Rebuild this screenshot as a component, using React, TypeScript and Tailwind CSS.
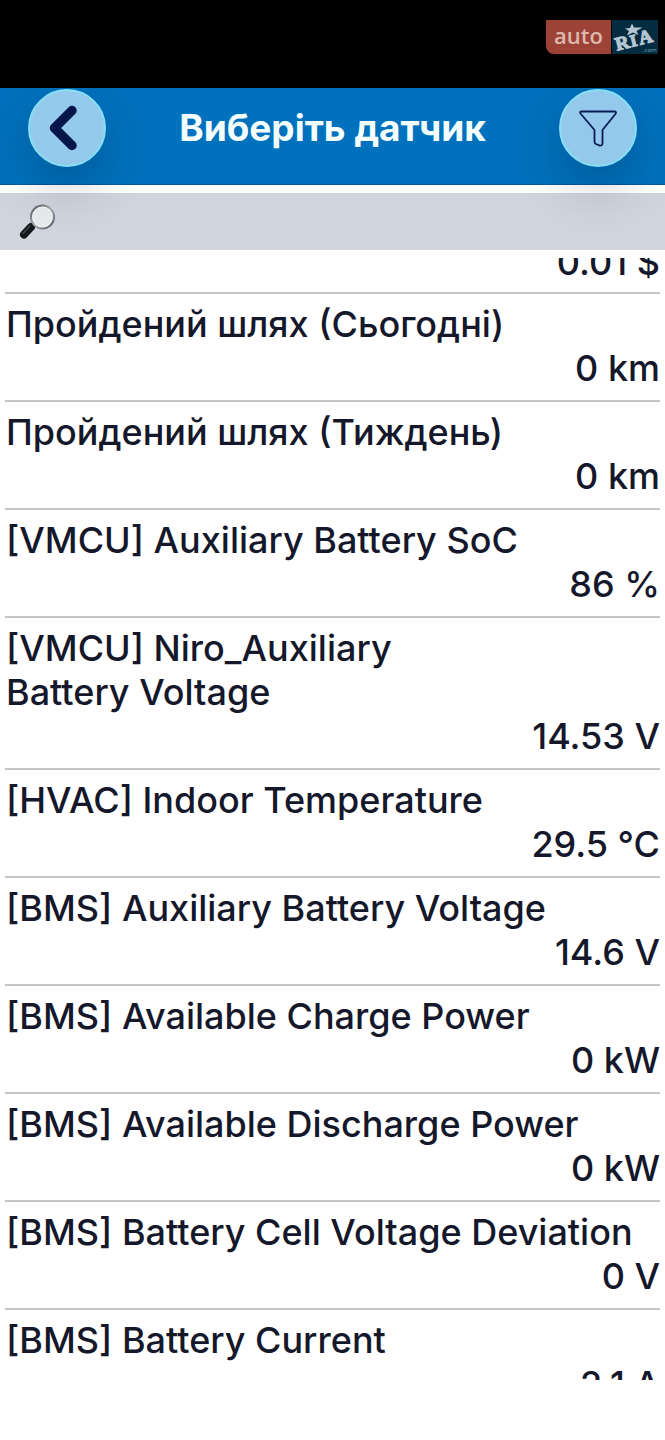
type Sensor = {
  name: string
  value: string
}

const sensors: Sensor[] = [
  { name: "Пройдений шлях (Сьогодні)", value: "0 km" },
  { name: "Пройдений шлях (Тиждень)", value: "0 km" },
  { name: "[VMCU] Auxiliary Battery SoC", value: "86 %" },
  { name: "[VMCU] Niro_Auxiliary\nBattery Voltage", value: "14.53 V" },
  { name: "[HVAC] Indoor Temperature", value: "29.5 °C" },
  { name: "[BMS] Auxiliary Battery Voltage", value: "14.6 V" },
  { name: "[BMS] Available Charge Power", value: "0 kW" },
  { name: "[BMS] Available Discharge Power", value: "0 kW" },
  { name: "[BMS] Battery Cell Voltage Deviation", value: "0 V" },
  { name: "[BMS] Battery Current", value: "2.1 A" },
]

function AutoRiaLogo() {
  return (
    <div className="flex h-[34px] gap-[1px]">
      <span className="flex w-[65px] items-center justify-center rounded-bl-lg bg-[#9c4237] pb-1 font-['Open_Sans',sans-serif] text-[22px] leading-none font-semibold text-[#dfb9ae]">
        auto
      </span>
      <svg viewBox="0 0 46 34" className="h-[34px] w-[46px] bg-[#032c40]" role="img" aria-label="RIA.com">
        <path d="M20 3.5l2 4 8.500 0-6 3.500 2 4-5.500-2.500-6 3 2-4.500-4-2.500 5-.5z" fill="#b4c6d2" />
        <g transform="rotate(-14 23 20)" fill="#b4c6d2" stroke="#b4c6d2" strokeWidth="1.2">
          <text x="3" y="26" fontFamily="'Liberation Serif', serif" fontSize="19" fontWeight="700">
            R
          </text>
          <text x="18" y="26" fontFamily="'Liberation Serif', serif" fontSize="17" fontWeight="700">
            I
          </text>
          <text x="27" y="26" fontFamily="'Liberation Serif', serif" fontSize="19" fontWeight="700">
            A
          </text>
        </g>
        <text x="31" y="32" fontFamily="'Open Sans', sans-serif" fontSize="6" fill="#8ba5b4">
          .com
        </text>
      </svg>
    </div>
  )
}

function MagnifierIcon() {
  return (
    <svg viewBox="0 0 38 38" className="size-[38px] shrink-0" aria-hidden="true">
      <defs>
        <linearGradient id="rim" x1="0" y1="0" x2="1" y2="1">
          <stop offset="0" stopColor="#4d4f54" />
          <stop offset="0.5" stopColor="#a9abb0" />
          <stop offset="1" stopColor="#4d4f54" />
        </linearGradient>
      </defs>
      <path d="M13 23l3.500-3.500" stroke="#77797d" strokeWidth="4" />
      <path d="M6 31.500l7-7.500" stroke="#15181b" strokeWidth="8" strokeLinecap="round" />
      <path d="M5 30.500l7-7.500" stroke="#41484a" strokeWidth="1.500" strokeLinecap="round" />
      <circle cx="24.500" cy="14" r="11.500" fill="#e9eaed" stroke="url(#rim)" strokeWidth="2" />
      <circle cx="24.500" cy="14" r="9.800" fill="none" stroke="#f8f8fa" strokeWidth="0.8" />
    </svg>
  )
}

const roundButton =
  "flex size-[78px] shrink-0 items-center justify-center rounded-full border-2 border-[#86e0f5] bg-[#94c9ec] shadow-[0_20px_50px_rgba(0,0,0,0.2)]"

export default function App() {
  return (
    <div className="flex h-screen flex-col bg-white pb-[60px] font-[Inter,sans-serif] text-4xl text-[#15182b]">
      <div className="flex h-[88px] shrink-0 items-start justify-end bg-black pt-5 pr-[7px]">
        <AutoRiaLogo />
      </div>

      <header className="relative flex h-[97px] shrink-0 items-start justify-between border-b border-[#07589b] bg-[#0071bd] px-7 pt-[1px]">
        <button type="button" aria-label="Назад" className={roundButton}>
          <svg viewBox="0 0 78 78" className="size-[78px] shrink-0" fill="none" aria-hidden="true">
            <path
              d="M44 21.500L26.500 39 44 56.500"
              stroke="#07164a"
              strokeWidth="9.500"
              strokeLinecap="round"
              strokeLinejoin="round"
            />
          </svg>
        </button>
        <h1 className="pt-[17px] text-[37px] leading-[44px] font-bold whitespace-nowrap text-[#f5feff]">
          Виберіть датчик
        </h1>
        <button type="button" aria-label="Фільтр" className={roundButton}>
          <svg viewBox="0 0 78 78" className="size-[78px] shrink-0" fill="none" aria-hidden="true">
            <path
              d="M22.500 22.500h33q2 0 1.300 2L43.500 41v13q0 3-3 2.500l-3.500-1.500q-1.500-.7-1.500-2.500V41L21.500 24.500q-1-2 1-2z"
              stroke="#0b1a55"
              strokeWidth="1.800"
              strokeLinejoin="round"
            />
          </svg>
        </button>
      </header>

      <label className="mt-2 mb-2 flex h-[57px] shrink-0 items-center bg-[#d0d4dd] pl-[18px]">
        <MagnifierIcon />
        <input
          type="search"
          aria-label="Пошук датчика"
          className="h-full min-w-0 flex-1 bg-transparent px-2 text-3xl outline-none"
        />
      </label>

      <main className="min-h-0 flex-1 overflow-hidden px-[5px] font-medium">
        <div className="flex h-[34px] items-end justify-end overflow-hidden pb-2 leading-[44px]">0.01 $</div>
        <ul>
          {sensors.map((sensor) => (
            <li key={sensor.name} className="border-t-2 border-[#c4c4c6] pt-2 pb-[10px] leading-[44px]">
              <p className="pl-px whitespace-pre-line">{sensor.name}</p>
              <p className="text-right">{sensor.value}</p>
            </li>
          ))}
        </ul>
      </main>
    </div>
  )
}
